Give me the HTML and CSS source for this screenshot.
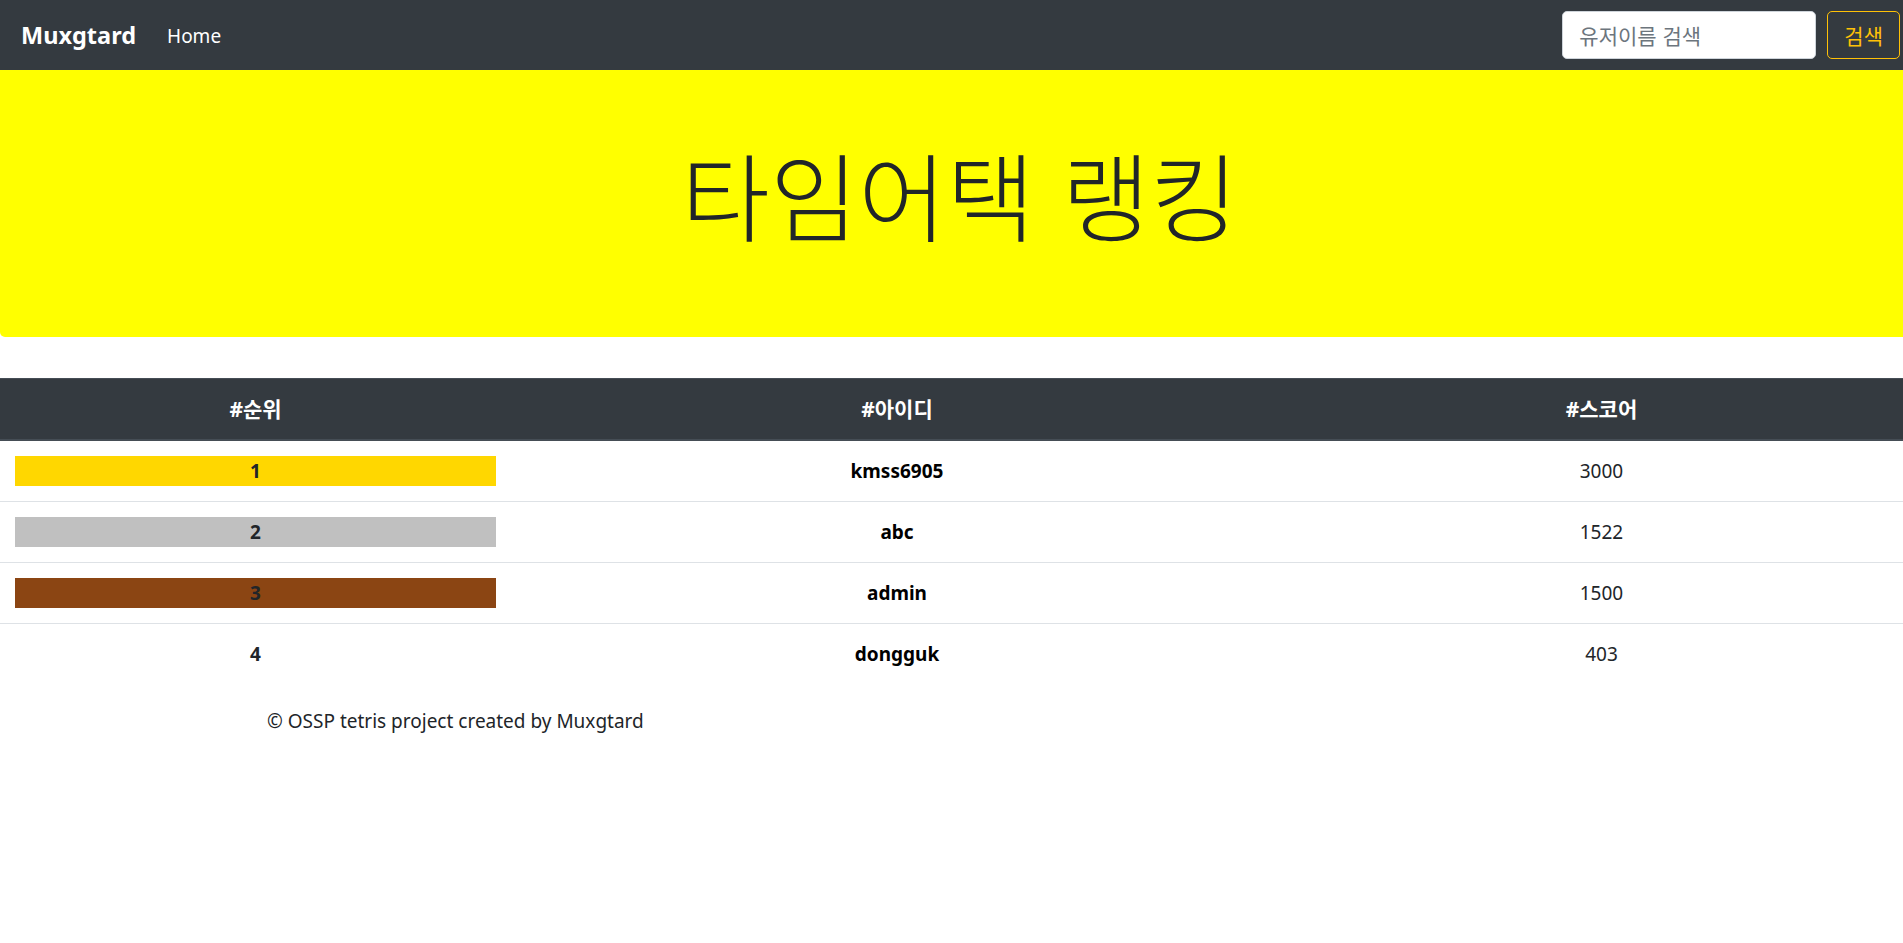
FILE: index.html
```html
<!DOCTYPE html>
<html lang="ko">
<head>
<meta charset="utf-8">
<title>타임어택 랭킹</title>
<link rel="stylesheet" href="styles.css">
</head>
<body>
<nav class="navbar">
  <a class="brand" href="#">Muxgtard</a>
  <a class="nav-link" href="#">Home</a>
  <form class="search">
    <input class="search-input" type="text" placeholder="유저이름 검색">
    <button class="search-btn" type="button">검색</button>
  </form>
</nav>
<main class="page">
  <div class="jumbotron">
    <h1 class="title">타임어택 랭킹</h1>
  </div>
  <table class="ranking">
    <colgroup>
      <col class="col-rank">
      <col class="col-id">
      <col class="col-score">
    </colgroup>
    <thead>
      <tr><th>#순위</th><th>#아이디</th><th>#스코어</th></tr>
    </thead>
    <tbody>
      <tr class="first"><td><div class="medal gold">1</div></td><td class="uid">kmss6905</td><td>3000</td></tr>
      <tr><td><div class="medal silver">2</div></td><td class="uid">abc</td><td>1522</td></tr>
      <tr><td><div class="medal bronze">3</div></td><td class="uid">admin</td><td>1500</td></tr>
      <tr><td><div class="medal">4</div></td><td class="uid">dongguk</td><td>403</td></tr>
    </tbody>
  </table>
  <footer class="footer">© OSSP tetris project created by Muxgtard</footer>
</main>
</body>
</html>
```
FILE: styles.css
```css
html { overflow-x: hidden; }
body {
  margin: 0;
  font-family: "Noto Sans", "Noto Sans CJK KR", sans-serif;
  font-size: 19px;
  line-height: 1.5;
  color: #212529;
  background: #fff;
}
.navbar {
  display: flex;
  align-items: center;
  height: 70px;
  padding: 0 3px 0 21px;
  background: #343a40;
  box-sizing: border-box;
}
.brand {
  color: #fff;
  font-size: 23.5px;
  font-weight: 700;
  text-decoration: none;
  margin-right: 31px;
  padding-top: 2px;
}
.nav-link {
  color: #fff;
  font-size: 19px;
  text-decoration: none;
  padding-top: 2px;
}
.search {
  margin-left: auto;
  display: flex;
  align-items: center;
}
.search-input {
  width: 254px;
  height: 48px;
  box-sizing: border-box;
  padding: 0 16px;
  border: 1px solid #ced4da;
  border-radius: 5px;
  font-family: "Noto Sans CJK KR", sans-serif;
  font-size: 21px;
  color: #495057;
  background: #fff;
  outline: none;
}
.search-input::placeholder { color: #6c757d; }
.search-btn {
  margin-left: 11px;
  height: 48px;
  box-sizing: border-box;
  padding: 0 16px;
  border: 1px solid #ffc107;
  border-radius: 5px;
  background: transparent;
  color: #ffc107;
  font-family: "Noto Sans CJK KR", sans-serif;
  font-size: 21px;
  line-height: 1;
}
.page { width: 1920px; }
.jumbotron {
  background: #ffff00;
  padding: 65px 32px 87px;
  border-radius: 0 0 5px 5px;
  margin-bottom: 41px;
}
.title {
  margin: 0;
  text-align: center;
  font-family: "Noto Sans CJK KR", sans-serif;
  font-size: 96px;
  font-weight: 300;
  line-height: 1.2;
  color: #212529;
}
.ranking {
  width: 1920px;
  border-collapse: separate;
  border-spacing: 0;
  table-layout: fixed;
}
.col-rank { width: 511px; }
.col-id { width: 772px; }
.ranking th {
  background: #343a40;
  color: #fff;
  font-size: 21px;
  font-weight: 700;
  text-align: center;
  padding: 15px;
  line-height: 30px;
  border-top: 1px solid #454d55;
  border-bottom: 2px solid #454d55;
}
.ranking td {
  text-align: center;
  padding: 15px;
  line-height: 30px;
  border-top: 1px solid #dee2e6;
}
.ranking tr.first td { border-top: 0; }
.ranking .uid { font-weight: 700; color: #000; }
.medal {
  height: 30px;
  font-weight: 700;
  color: #212529;
}
.gold { background: #ffd700; }
.silver { background: #c0c0c0; }
.bronze { background: #8b4513; }
.footer {
  padding: 23px 0 0 267px;
  line-height: 28px;
}
```
